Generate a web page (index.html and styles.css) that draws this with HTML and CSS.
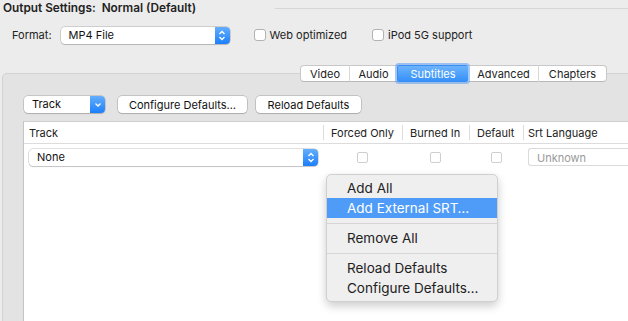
FILE: index.html
```html
<!DOCTYPE html>
<html>
<head>
<meta charset="utf-8">
<link rel="stylesheet" href="styles.css">
</head>
<body>
<div class="header">
  <span class="title">Output Settings:&nbsp;&nbsp;Normal (Default)</span>
  <span class="rule"></span>
</div>
<div class="format-row">
  <span class="label">Format:</span>
  <div class="popup format-popup">
    <span class="popup-text">MP4 File</span>
    <span class="stepper">
      <svg width="8" height="11" viewBox="0 0 8 11"><path d="M1.5 4 L4 1.5 L6.5 4 M1.5 7 L4 9.5 L6.5 7" fill="none" stroke="#fff" stroke-width="1.3"/></svg>
    </span>
  </div>
  <label class="check"><span class="box"></span>Web optimized</label>
  <label class="check ipod"><span class="box"></span>iPod 5G support</label>
</div>
<div class="tabs">
  <span class="tab">Video</span>
  <span class="tab">Audio</span>
  <span class="tab active">Subtitles</span>
  <span class="tab">Advanced</span>
  <span class="tab last">Chapters</span>
</div>
<div class="panel">
  <div class="toolbar">
    <div class="popup track-popup">
      <span class="popup-text">Track</span>
      <span class="stepper">
        <svg width="8" height="6" viewBox="0 0 8 6"><path d="M1.5 1.5 L4 4 L6.5 1.5" fill="none" stroke="#fff" stroke-width="1.3"/></svg>
      </span>
    </div>
    <button class="btn configure">Configure Defaults…</button>
    <button class="btn reload">Reload Defaults</button>
  </div>
  <div class="table">
    <div class="thead">
      <div class="th c-track">Track</div>
      <div class="th c-forced">Forced Only</div>
      <div class="th c-burned">Burned In</div>
      <div class="th c-default">Default</div>
      <div class="th c-lang">Srt Language</div>
    </div>
    <div class="row">
      <div class="td c-track">
        <div class="popup none-popup">
          <span class="popup-text">None</span>
          <span class="stepper">
            <svg width="8" height="11" viewBox="0 0 8 11"><path d="M1.5 4 L4 1.5 L6.5 4 M1.5 7 L4 9.5 L6.5 7" fill="none" stroke="#fff" stroke-width="1.3"/></svg>
          </span>
        </div>
      </div>
      <div class="td c-forced"><span class="sbox"></span></div>
      <div class="td c-burned"><span class="sbox"></span></div>
      <div class="td c-default"><span class="sbox"></span></div>
      <div class="td c-lang"><div class="combo">Unknown</div></div>
    </div>
    <div class="menu">
      <div class="item">Add All</div>
      <div class="item hl">Add External SRT…</div>
      <div class="sep"></div>
      <div class="item">Remove All</div>
      <div class="sep"></div>
      <div class="item">Reload Defaults</div>
      <div class="item">Configure Defaults…</div>
    </div>
  </div>
</div>
</body>
</html>
```
FILE: styles.css
```css
html, body {
  margin: 0;
  padding: 0;
  width: 628px;
  height: 321px;
  overflow: hidden;
  background: #ececec;
  font-family: Inter, Roboto, "Liberation Sans", sans-serif;
  font-size: 11px;
  color: #222;
}

.header {
  display: flex;
  align-items: center;
  height: 16px;
  padding: 0 0 0 3px;
}
.title {
  font-weight: 600;
  font-size: 11.8px;
  white-space: nowrap;
}
.rule {
  flex: 1;
  height: 1px;
  background: #d6d6d6;
  margin-left: 79px;
}

.format-row {
  display: flex;
  align-items: center;
  height: 18px;
  margin-top: 10px;
  padding-left: 12px;
}
.label { margin-right: 9px; }

.popup {
  display: flex;
  align-items: stretch;
  height: 17px;
  box-sizing: border-box;
  background: #fff;
  border-radius: 4px;
  box-shadow: 0 0 0 0.5px rgba(0,0,0,0.25), 0 1px 1px rgba(0,0,0,0.12);
  overflow: hidden;
}
.popup-text {
  flex: 1;
  padding-left: 8px;
  line-height: 17px;
  color: #111;
}
.stepper {
  width: 15px;
  display: flex;
  align-items: center;
  justify-content: center;
  background: linear-gradient(#64aefc, #1c7ffb);
}
.format-popup { width: 169px; }

.check {
  display: flex;
  align-items: center;
  margin-left: 24px;
}
.check .box {
  width: 12px;
  height: 12px;
  box-sizing: border-box;
  border: 1px solid #b2b2b2;
  border-radius: 3px;
  background: #fff;
  margin-right: 4px;
}
.check.ipod { margin-left: 25px; }

.tabs {
  display: flex;
  justify-content: flex-end;
  margin-top: 21px;
  margin-right: 21px;
  height: 17px;
  position: relative;
  z-index: 2;
}
.tab {
  height: 17px;
  line-height: 16px;
  box-sizing: border-box;
  padding: 0;
  text-align: center;
  background: #fff;
  border-top: 1px solid #c8c8c8;
  border-bottom: 1px solid #b8b8b8;
  border-left: 1px solid #d8d8d8;
  font-size: 11px;
}
.tab:first-child {
  border-left: 1px solid #c8c8c8;
  border-radius: 4px 0 0 4px;
}
.tab.last {
  border-right: 1px solid #c8c8c8;
  border-radius: 0 4px 4px 0;
}
.tab:nth-child(1) { width: 49px; }
.tab:nth-child(2) { width: 48px; }
.tab:nth-child(3) { width: 71px; }
.tab:nth-child(4) { width: 70px; }
.tab:nth-child(5) { width: 69px; }
.tab.active {
  background: linear-gradient(#6db3fb, #3591fb);
  color: #fff;
  border-color: #3a8ef0;
  border-radius: 2px;
  box-shadow: 0 0 0 2px rgba(90,155,240,0.55);
  position: relative;
  z-index: 3;
}
.tab.active + .tab { border-left-color: transparent; }

.panel {
  margin-top: -9px;
  margin-left: 2px;
  margin-right: -10px;
  height: 248px;
  box-sizing: border-box;
  background: #e3e3e3;
  border: 1px solid #d2d2d2;
  border-bottom: none;
  border-radius: 5px 5px 0 0;
  padding-top: 22px;
  padding-left: 20px;
}

.toolbar {
  display: flex;
  align-items: center;
  height: 17px;
}
.track-popup { width: 81px; margin-left: 1px; }
.btn {
  font: inherit;
  color: #111;
  height: 17px;
  box-sizing: border-box;
  padding: 0;
  background: #fff;
  border: none;
  border-radius: 4px;
  box-shadow: 0 0 0 0.5px rgba(0,0,0,0.28), 0 1px 1px rgba(0,0,0,0.12);
  text-align: center;
}
.configure { width: 129px; margin-left: 13px; }
.reload { width: 105px; margin-left: 9px; }

.table {
  position: relative;
  margin-top: 8px;
  background: #fff;
  border-left: 1px solid #c4c4c4;
  border-top: 1px solid #d0d0d0;
  height: 199px;
}
.thead {
  display: flex;
  height: 22px;
  border-bottom: 1px solid #dcdcdc;
  box-sizing: border-box;
}
.th {
  display: flex;
  align-items: center;
  padding-left: 5px;
  box-sizing: border-box;
  position: relative;
  color: #222;
}
.th + .th::before {
  content: "";
  position: absolute;
  left: 0;
  top: 3px;
  bottom: 3px;
  width: 1px;
  background: #dcdcdc;
}
.c-track { width: 299px; }
.c-forced { width: 79px; padding-left: 8px; }
.c-burned { width: 67px; padding-left: 8px; }
.c-default { width: 54px; padding-left: 8px; }
.c-lang { flex: 1; }

.row {
  display: flex;
  height: 26px;
  align-items: center;
}
.td {
  display: flex;
  align-items: center;
  box-sizing: border-box;
}
.td.c-track { padding-left: 5px; padding-right: 4px; }
.none-popup { width: 289px; }
.td.c-forced, .td.c-burned, .td.c-default {
  justify-content: center;
  padding-left: 0;
}
.sbox {
  width: 11px;
  height: 11px;
  box-sizing: border-box;
  border: 1px solid #cfcfcf;
  border-radius: 2px;
  background: #fff;
}
.td.c-lang { padding-left: 5px; }
.combo {
  flex: 1;
  height: 18px;
  line-height: 18px;
  box-sizing: border-box;
  border: 1px solid #dadada;
  border-right: none;
  border-radius: 3px 0 0 3px;
  padding-left: 8px;
  color: #9a9a9a;
}

.menu {
  position: absolute;
  left: 302px;
  top: 52px;
  width: 172px;
  box-sizing: border-box;
  padding: 3px 0 3px;
  background: #efefef;
  border: 1px solid #cfcfcf;
  border-radius: 5px;
  box-shadow: 0 4px 10px rgba(0,0,0,0.2);
  font-size: 13.5px;
  color: #222;
  z-index: 5;
}
.menu .item {
  height: 20px;
  line-height: 20px;
  padding-left: 20px;
}
.menu .item.hl {
  background: #4f9cf8;
  color: #fff;
}
.menu .sep {
  height: 1px;
  background: #d6d6d6;
  margin: 5px 0 4px;
}
```
